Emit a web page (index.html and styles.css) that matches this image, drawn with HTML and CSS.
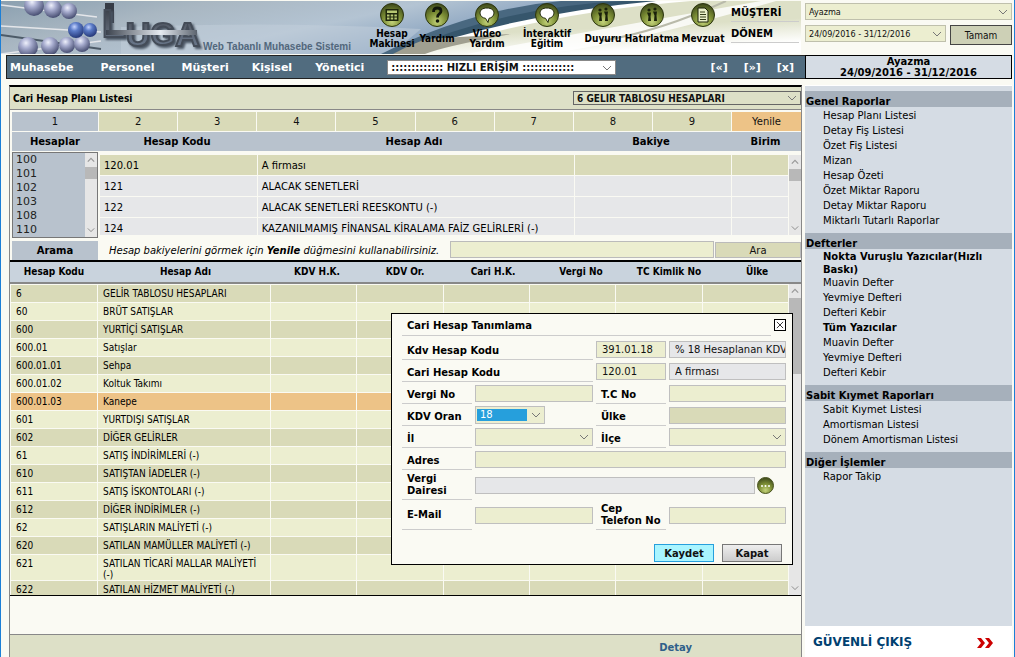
FILE: index.html
```html
<!DOCTYPE html>
<html lang="tr">
<head>
<meta charset="utf-8">
<title>Luca - Cari Hesap Planı Listesi</title>
<link rel="stylesheet" href="styles.css">
</head>
<body>
<svg class="defs" width="0" height="0" aria-hidden="true">
  <defs>
    <radialGradient id="ball" cx="0.4" cy="0.3" r="0.75">
      <stop offset="0" stop-color="#eef0fb"/><stop offset="0.35" stop-color="#a9aed0"/><stop offset="1" stop-color="#3d4468"/>
    </radialGradient>
    <radialGradient id="blueball" cx="0.4" cy="0.3" r="0.75">
      <stop offset="0" stop-color="#c5d4ff"/><stop offset="0.35" stop-color="#5c7cc8"/><stop offset="1" stop-color="#1f3170"/>
    </radialGradient>
    <radialGradient id="olive" cx="0.5" cy="0.8" r="0.8">
      <stop offset="0" stop-color="#c3d27a"/><stop offset="0.5" stop-color="#7d8f35"/><stop offset="1" stop-color="#3a451a"/>
    </radialGradient>
    <linearGradient id="sky" x1="0" y1="0" x2="1" y2="0.4">
      <stop offset="0" stop-color="#8ba0b0"/><stop offset="0.3" stop-color="#a9b7c2"/><stop offset="0.6" stop-color="#b4c4d3"/><stop offset="1" stop-color="#7090b4"/>
    </linearGradient>
    <linearGradient id="steel" x1="0" y1="0" x2="0" y2="1">
      <stop offset="0" stop-color="#2f343c"/><stop offset="0.5" stop-color="#59616e"/><stop offset="1" stop-color="#6f7f95"/>
    </linearGradient>
    <linearGradient id="bar" x1="0" y1="0" x2="1" y2="0">
      <stop offset="0" stop-color="#3b424d"/><stop offset="0.6" stop-color="#e5eaf0"/><stop offset="1" stop-color="#5c646f"/>
    </linearGradient>
    <linearGradient id="fade" x1="0" y1="0" x2="0.35" y2="1">
      <stop offset="0" stop-color="#dde0c7"/><stop offset="0.6" stop-color="#dde0c7"/><stop offset="1" stop-color="#ffffff"/>
    </linearGradient>
    <symbol id="down" viewBox="0 0 10 6"><path d="M1 1l4 4 4-4" fill="none" stroke="#777" stroke-width="1"/></symbol>
    <symbol id="up" viewBox="0 0 10 6"><path d="M1 5l4-4 4 4" fill="none" stroke="#999" stroke-width="1.5"/></symbol>
  </defs>
</svg>

<div class="page">
  <header class="top">
    <svg class="art" viewBox="0 0 800 53" preserveAspectRatio="xMinYMin slice" aria-hidden="true">
      <rect width="800" height="53" fill="#fafaf3"/>
      <rect width="620" height="53" fill="url(#sky)"/>
      <path d="M120 26Q280 20 420 28L390 53H120Z" fill="#c3d0dc" opacity="0.5"/>
      <path d="M380 53Q470 8 560 0H800V53Z" fill="#496880"/>
      <path d="M394 53Q500 6 622 0H800V53Z" fill="#36566c"/>
      <path d="M400 53Q520 12 655 0H800V53Z" fill="#ffffff"/>
      <path d="M418 53Q540 12 690 0H800V53Z" fill="url(#fade)"/>
      <path d="M392 53Q408 44 425 38L510 33Q440 46 424 53Z" fill="#a09f90"/>
      <path d="M465 53Q600 28 760 0H775Q640 40 545 53Z" fill="#ffffff" opacity="0.8"/>
      <path d="M600 40Q660 30 725 0" stroke="#b9baaa" stroke-width="2" fill="none"/>
      <g stroke="#e4e6ea" stroke-width="1.5">
        <path d="M0 4L96 16M0 25L100 31M0 53L100 40"/>
      </g>
      <path d="M0 34L100 48" stroke="#4d5b68" stroke-width="2"/>
      <g fill="url(#ball)">
        <circle cx="33" cy="5" r="10"/><circle cx="52" cy="8" r="9"/><circle cx="68" cy="10" r="8"/>
        <circle cx="27" cy="46" r="10"/><circle cx="49" cy="45" r="9"/><circle cx="66" cy="44" r="8"/><circle cx="81" cy="43" r="8"/>
      </g>
      <g fill="url(#blueball)"><circle cx="75" cy="29" r="8"/><circle cx="89" cy="29" r="7"/></g>
      <rect x="104" y="2" width="9" height="20" fill="#363c46"/>
      <text class="logo" x="101" y="36" fill="url(#steel)"><tspan font-size="39">L</tspan><tspan font-size="34" dy="9">U</tspan><tspan font-size="32" dy="-1">G</tspan><tspan font-size="34" dy="1">A</tspan></text>
      <rect x="105" y="29" width="91" height="5" fill="url(#bar)"/>
      <text class="slogan" x="202" y="49">Web Tabanlı Muhasebe Sistemi</text>
    </svg>
    <nav class="tools">
      <a href="#"><svg viewBox="0 0 24 24"><circle cx="12" cy="12" r="11.5" fill="url(#olive)" stroke="#2c3510"/><rect x="5.500" y="6" width="13" height="12" fill="#1f270c"/><rect x="7" y="7.500" width="10" height="2.500" fill="#b7c773"/><path d="M7 12.500h10M7 15.500h10" stroke="#b7c773" stroke-width="2" stroke-dasharray="2.500 1.200"/></svg><span>Hesap<br>Makinesi</span></a>
      <a href="#"><svg viewBox="0 0 24 24"><circle cx="12" cy="12" r="11.5" fill="url(#olive)" stroke="#2c3510"/><path d="M8.500 9q0-4 4-4 3.500 0 3.500 3 0 2-2 3.200-1.500 1-1.500 3.300" fill="none" stroke="#11160a" stroke-width="2.800"/><circle cx="12.500" cy="18" r="1.800" fill="#11160a"/></svg><span>Yardım</span></a>
      <a href="#"><svg viewBox="0 0 24 24"><circle cx="12" cy="12" r="11.5" fill="url(#olive)" stroke="#2c3510"/><path d="M12 5c4.500 0 7 2.200 7 5s-2.500 5-5 5.300L13 19.500l-2.500-4.200C7.500 15 5 13 5 10s2.500-5 7-5z" fill="#fff" stroke="#222a0e"/></svg><span>Video<br>Yardım</span></a>
      <a href="#"><svg viewBox="0 0 24 24"><circle cx="12" cy="12" r="11.5" fill="url(#olive)" stroke="#2c3510"/><path d="M12 5c4.500 0 7 2.200 7 5s-2.500 5-5 5.300L13 19.500l-2.500-4.200C7.500 15 5 13 5 10s2.500-5 7-5z" fill="#fff" stroke="#222a0e"/></svg><span>İnteraktif<br>Eğitim</span></a>
      <a href="#"><svg viewBox="0 0 24 24"><circle cx="12" cy="12" r="11.5" fill="url(#olive)" stroke="#2c3510"/><g fill="#1a210b"><circle cx="9" cy="7" r="1.600"/><path d="M7 9.500h4l-.5 4 .5 4.500H8l.5-4.500z"/><circle cx="15" cy="6" r="1.600"/><path d="M13 8.500h4l-.5 4 .5 5.500h-3l.5-5.500z"/></g></svg><span>Duyuru</span></a>
      <a href="#"><svg viewBox="0 0 24 24"><circle cx="12" cy="12" r="11.5" fill="url(#olive)" stroke="#2c3510"/><g fill="#1a210b"><circle cx="9" cy="7" r="1.600"/><path d="M7 9.500h4l-.5 4 .5 4.500H8l.5-4.500z"/><circle cx="15" cy="6" r="1.600"/><path d="M13 8.500h4l-.5 4 .5 5.500h-3l.5-5.500z"/></g></svg><span>Hatırlatma</span></a>
      <a href="#"><svg viewBox="0 0 24 24"><circle cx="12" cy="12" r="11.5" fill="url(#olive)" stroke="#2c3510"/><path d="M7 5h7l3 3v11H7z" fill="#e9efc8" stroke="#1a210b"/><path d="M9 9h5M9 11.500h6M9 14h6M9 16.500h6" stroke="#333d18"/></svg><span>Mevzuat</span></a>
    </nav>
    <div class="caption"><label for="musteri">MÜŞTERİ</label><label for="donem">DÖNEM</label></div>
    <div class="choose">
      <div class="pick small"><select id="musteri"><option>Ayazma</option></select><svg><use href="#down"/></svg></div>
      <div class="period">
        <div class="pick small"><select id="donem"><option>24/09/2016 - 31/12/2016</option></select><svg><use href="#down"/></svg></div>
        <button class="ok" type="button">Tamam</button>
      </div>
    </div>
  </header>

  <div class="strip">
    <nav class="menu">
      <a href="#">Muhasebe</a><a href="#">Personel</a><a class="near" href="#">Müşteri</a><a class="near" href="#">Kişisel</a><a class="near" href="#">Yönetici</a>
      <div class="pick quick"><select aria-label="Hızlı erişim"><option>::::::::::::: HIZLI ERİŞİM :::::::::::::</option></select><svg><use href="#down"/></svg></div>
      <div class="jumps"><a href="#">[«]</a><a href="#">[»]</a><a href="#">[x]</a></div>
    </nav>
    <div class="company"><span>Ayazma</span><span>24/09/2016 - 31/12/2016</span></div>
  </div>

  <div class="body">
    <main class="main">
      <div class="titlebar">
        <h1>Cari Hesap Planı Listesi</h1>
        <div class="pick group"><select aria-label="Hesap grubu"><option>6 GELİR TABLOSU HESAPLARI</option></select><svg><use href="#down"/></svg></div>
      </div>
      <div class="filter">
        <div class="tabs">
          <button class="on" type="button">1</button><button type="button">2</button><button type="button">3</button><button type="button">4</button><button type="button">5</button><button type="button">6</button><button type="button">7</button><button type="button">8</button><button type="button">9</button><button class="renew" type="button">Yenile</button>
        </div>
        <div class="heads"><span>Hesaplar</span><span>Hesap Kodu</span><span>Hesap Adı</span><span>Bakiye</span><span>Birim</span></div>
        <div class="lists">
          <div class="codes">
            <select size="6" aria-label="Hesaplar"><option>100</option><option>101</option><option>102</option><option>103</option><option>108</option><option>110</option></select>
            <div class="bar short"><svg><use href="#up"/></svg><i></i><svg><use href="#down"/></svg></div>
          </div>
          <div class="picked">
            <table>
              <colgroup><col class="w1"><col class="w2"><col class="w3"><col class="w4"></colgroup>
              <tr class="sel"><td>120.01</td><td>A firması</td><td></td><td></td></tr>
              <tr><td>121</td><td>ALACAK SENETLERİ</td><td></td><td></td></tr>
              <tr><td>122</td><td>ALACAK SENETLERİ REESKONTU (-)</td><td></td><td></td></tr>
              <tr><td>124</td><td>KAZANILMAMIŞ FİNANSAL KİRALAMA FAİZ GELİRLERİ (-)</td><td></td><td></td></tr>
            </table>
            <div class="bar short"><svg><use href="#up"/></svg><i></i><svg><use href="#down"/></svg></div>
          </div>
        </div>
        <div class="search">
          <label for="ara">Arama</label>
          <p>Hesap bakiyelerini görmek için <b>Yenile</b> düğmesini kullanabilirsiniz.</p>
          <input id="ara" type="text">
          <button type="button">Ara</button>
        </div>
      </div>
      <div class="gridhead"><span>Hesap Kodu</span><span>Hesap Adı</span><span>KDV H.K.</span><span>KDV Or.</span><span>Cari H.K.</span><span>Vergi No</span><span>TC Kimlik No</span><span>Ülke</span></div>
      <div class="scroll">
        <table class="accounts">
          <colgroup><col class="c1"><col class="c2"><col class="c3"><col class="c3"><col class="c3"><col class="c3"><col class="c3"><col class="c3"></colgroup>
          <tr><td>6</td><td>GELİR TABLOSU HESAPLARI</td><td></td><td></td><td></td><td></td><td></td><td></td></tr>
          <tr><td>60</td><td>BRÜT SATIŞLAR</td><td></td><td></td><td></td><td></td><td></td><td></td></tr>
          <tr><td>600</td><td>YURTİÇİ SATIŞLAR</td><td></td><td></td><td></td><td></td><td></td><td></td></tr>
          <tr><td>600.01</td><td>Satışlar</td><td></td><td></td><td></td><td></td><td></td><td></td></tr>
          <tr><td>600.01.01</td><td>Sehpa</td><td></td><td></td><td></td><td></td><td></td><td></td></tr>
          <tr><td>600.01.02</td><td>Koltuk Takımı</td><td></td><td></td><td></td><td></td><td></td><td></td></tr>
          <tr class="hot"><td>600.01.03</td><td>Kanepe</td><td></td><td></td><td></td><td></td><td></td><td></td></tr>
          <tr><td>601</td><td>YURTDIŞI SATIŞLAR</td><td></td><td></td><td></td><td></td><td></td><td></td></tr>
          <tr><td>602</td><td>DİĞER GELİRLER</td><td></td><td></td><td></td><td></td><td></td><td></td></tr>
          <tr><td>61</td><td>SATIŞ İNDİRİMLERİ (-)</td><td></td><td></td><td></td><td></td><td></td><td></td></tr>
          <tr><td>610</td><td>SATIŞTAN İADELER (-)</td><td></td><td></td><td></td><td></td><td></td><td></td></tr>
          <tr><td>611</td><td>SATIŞ İSKONTOLARI (-)</td><td></td><td></td><td></td><td></td><td></td><td></td></tr>
          <tr><td>612</td><td>DİĞER İNDİRİMLER (-)</td><td></td><td></td><td></td><td></td><td></td><td></td></tr>
          <tr><td>62</td><td>SATIŞLARIN MALİYETİ (-)</td><td></td><td></td><td></td><td></td><td></td><td></td></tr>
          <tr><td>620</td><td>SATILAN MAMÜLLER MALİYETİ (-)</td><td></td><td></td><td></td><td></td><td></td><td></td></tr>
          <tr><td>621</td><td>SATILAN TİCARİ MALLAR MALİYETİ (-)</td><td></td><td></td><td></td><td></td><td></td><td></td></tr>
          <tr><td>622</td><td>SATILAN HİZMET MALİYETİ (-)</td><td></td><td></td><td></td><td></td><td></td><td></td></tr>
        </table>
        <div class="bar long"><svg><use href="#up"/></svg><i></i><svg><use href="#down"/></svg></div>
      </div>
      <footer class="foot"><a href="#">Detay</a></footer>

      <form class="modal">
        <div class="modalhead"><h2>Cari Hesap Tanımlama</h2><button type="button" aria-label="Pencereyi kapat"><svg viewBox="0 0 9 9"><path d="M1 1l7 7M8 1l-7 7" stroke="#222" fill="none"/></svg></button></div>
        <div class="fields">
          <label class="wide" for="kdvkod">Kdv Hesap Kodu</label><input id="kdvkod" value="391.01.18"><input class="grey" aria-label="Kdv hesap adı" value="% 18 Hesaplanan KDV" readonly>
          <label class="wide" for="carikod">Cari Hesap Kodu</label><input id="carikod" value="120.01"><input class="grey" aria-label="Cari hesap adı" value="A firması" readonly>
          <label for="vergino">Vergi No</label><input id="vergino"><label for="tcno">T.C No</label><input id="tcno">
          <label for="oran">KDV Oran</label><div class="pick field rate"><select id="oran"><option>18</option></select><svg><use href="#down"/></svg></div><label for="ulke">Ülke</label><input id="ulke" class="khaki">
          <label for="il">İl</label><div class="pick field"><select id="il"><option></option></select><svg><use href="#down"/></svg></div><label for="ilce">İlçe</label><div class="pick field"><select id="ilce"><option></option></select><svg><use href="#down"/></svg></div>
          <label for="adres">Adres</label><input id="adres" class="full">
          <label class="two" for="daire">Vergi<br>Dairesi</label><div class="office"><input id="daire" class="grey" readonly><button type="button" aria-label="Vergi dairesi seç"><svg viewBox="0 0 17 17"><circle cx="8.500" cy="8.500" r="8" fill="url(#olive)" stroke="#4a5420"/><g fill="#fff"><circle cx="5" cy="9" r="1"/><circle cx="8.500" cy="9" r="1"/><circle cx="12" cy="9" r="1"/></g></svg></button></div>
          <label class="two" for="mail">E-Mail</label><input id="mail"><label class="two" for="cep">Cep<br>Telefon No</label><input id="cep">
        </div>
        <div class="actions"><button class="save" type="button">Kaydet</button><button type="button">Kapat</button></div>
      </form>
    </main>

    <aside class="side">
      <div class="reports">
        <section><h2>Genel Raporlar</h2><ul><li><a href="#">Hesap Planı Listesi</a></li><li><a href="#">Detay Fiş Listesi</a></li><li><a href="#">Özet Fiş Listesi</a></li><li><a href="#">Mizan</a></li><li><a href="#">Hesap Özeti</a></li><li><a href="#">Özet Miktar Raporu</a></li><li><a href="#">Detay Miktar Raporu</a></li><li><a href="#">Miktarlı Tutarlı Raporlar</a></li></ul></section>
        <section><h2>Defterler</h2><ul><li class="strong tight">Nokta Vuruşlu Yazıcılar(Hızlı Baskı)</li><li><a href="#">Muavin Defter</a></li><li><a href="#">Yevmiye Defteri</a></li><li><a href="#">Defteri Kebir</a></li><li class="strong">Tüm Yazıcılar</li><li><a href="#">Muavin Defter</a></li><li><a href="#">Yevmiye Defteri</a></li><li><a href="#">Defteri Kebir</a></li></ul></section>
        <section><h2>Sabit Kıymet Raporları</h2><ul><li><a href="#">Sabit Kıymet Listesi</a></li><li><a href="#">Amortisman Listesi</a></li><li><a href="#">Dönem Amortisman Listesi</a></li></ul></section>
        <section><h2>Diğer İşlemler</h2><ul><li><a href="#">Rapor Takip</a></li></ul></section>
      </div>
      <a class="exit" href="#">GÜVENLİ ÇIKIŞ <svg viewBox="0 0 16 10"><path d="M0 0h4l4 5-4 5H0l4-5zM8 0h4l4 5-4 5H8l4-5z" fill="#c00"/></svg></a>
    </aside>
  </div>
</div>
</body>
</html>
```
FILE: styles.css
```css
* { box-sizing: border-box; }

body {
  margin: 0;
  font: 10px/13px "DejaVu Sans", Verdana, sans-serif;
  color: #000;
  background: #fafaf3;
}

a { color: inherit; text-decoration: none; }
h1, h2, p, ul { margin: 0; padding: 0; font-size: 10px; }
ul { list-style: none; }
input, select, button { font: inherit; color: #111; margin: 0; border-radius: 0; min-width: 0; }
button { padding: 0; }
.defs { position: absolute; }

.page {
  min-height: 100vh;
  display: flex;
  flex-direction: column;
  border-left: 1px solid #1c7fd6;
  border-right: 1px solid #1c7fd6;
  padding-top: 1px;
}

/* drop-downs */
.pick { position: relative; display: flex; }
.pick select {
  appearance: none;
  width: 100%;
  height: 18px;
  padding: 0 16px 0 3px;
  border: 1px solid #bfc0ac;
  background: #eceed0;
}
.pick svg { position: absolute; right: 4px; top: 6px; width: 10px; height: 6px; pointer-events: none; }
.small { font: 9px/12px "DejaVu Sans Condensed", Tahoma, sans-serif; }
.small select { height: 17px; }

/* header */
.top { position: relative; display: flex; height: 53px; overflow: hidden; }
.art { position: absolute; left: 0; top: 0; width: 800px; height: 53px; }
.logo {
  font-family: "Liberation Sans", Arial, sans-serif;
  font-weight: bold;
  stroke: #444c58;
  stroke-width: 2px;
  filter: drop-shadow(2px 2px 1px #4a5563);
}
.slogan { font: bold 10px "Liberation Sans", Arial, sans-serif; fill: #52677c; }
.tools {
  position: relative;
  display: grid;
  grid-template-columns: 50px 40px 60px 60px 52px 46px 56px;
  margin-left: auto;
  padding-top: 2px;
  font: bold 10px/10px "DejaVu Sans Condensed", Tahoma, sans-serif;
}
.tools a { display: flex; flex-direction: column; align-items: center; }
.tools svg { width: 24px; height: 24px; }
.tools span { flex: 1; display: flex; align-items: center; padding-bottom: 3px; text-align: center; white-space: nowrap; }
.caption { position: relative; width: 68px; font-weight: bold; }
.caption label { display: block; height: 21px; padding-top: 5px; border-bottom: 1px solid #ccc; }
.choose { position: relative; width: 207px; margin: 2px 2px 0 6px; }
.period { display: grid; grid-template-columns: 1fr 62px; gap: 4px; margin-top: 5px; align-items: start; }
.ok { height: 20px; border: 1px solid #444; background: #cdd0b6; font: 10px "DejaVu Sans Condensed", Tahoma, sans-serif; }

/* menu strip */
.strip { display: flex; margin: 1px 2px 0 5px; height: 24px; }
.menu {
  flex: 1;
  display: flex;
  align-items: center;
  padding: 0 11px 0 3px;
  background: #516c7f;
  border: 1px solid #222;
  border-right: 0;
  color: #fff;
  font-size: 11px;
  font-weight: bold;
}
.menu > a { margin-right: 27px; }
.menu > .near { margin-right: 23px; }
.quick { flex: 0 0 229px; font-size: 10px; }
.quick select { height: 15px; background: #fff; border-color: #888; font-weight: bold; }
.quick svg { top: 5px; }
.jumps { margin-left: auto; display: flex; gap: 16px; }
.company {
  width: 207px;
  display: flex;
  flex-direction: column;
  align-items: center;
  border: 1px solid #000;
  background: #d5dce4;
  font-weight: bold;
  line-height: 11px;
}

/* two columns */
.body { flex: 1; display: flex; gap: 3px; margin: 6px 2px 0 8px; }
.main {
  position: relative;
  flex: 1;
  min-width: 0;
  display: flex;
  flex-direction: column;
  border: 1px solid #888;
  border-top: 2px solid #000;
  border-bottom: 0;
}
.titlebar {
  display: flex;
  align-items: center;
  justify-content: space-between;
  height: 23px;
  padding-left: 3px;
  background: #dde0c7;
  border-bottom: 1px solid #888;
  font: bold 10px "DejaVu Sans Condensed", Tahoma, sans-serif;
}
.group { width: 228px; }
.group select { height: 14px; border-color: #666; background: #dde0c7; font-weight: bold; }
.group svg { top: 4px; }

/* filter area */
.filter { padding: 2px 0 0 2px; }
.tabs { display: grid; grid-template-columns: 86px repeat(8, 1fr) 69px; gap: 1px; }
.tabs button { height: 19px; border: 0; background: #d9dab8; }
.tabs .on { background: #b8c2cd; }
.tabs .renew { background: #edc387; }
.heads, .lists { display: grid; }
.heads {
  grid-template-columns: 86px 158px 316px 158px 1fr;
  margin-top: 1px;
  line-height: 19px;
  text-align: center;
  font-weight: bold;
  background: #b8c2cd;
}
.lists { grid-template-columns: 86px 1fr; gap: 2px; padding-top: 1px; }
.codes { display: flex; height: 86px; border: 1px solid #777; background: #b8c2cd; }
.codes select { flex: 1; padding: 0; border: 0; background: none; overflow: hidden; font-size: 11px; appearance: none; color: #222; }
.codes option { height: 14px; min-height: 14px; padding: 0 3px; line-height: 14px; }
.picked { display: flex; height: 80px; margin-top: 3px; overflow: hidden; }
table { border-collapse: separate; border-spacing: 1px; table-layout: fixed; }
td { padding: 0 4px; vertical-align: top; }
.picked table { flex: 1; border-spacing: 0; }
.picked td { height: 21px; padding-top: 1px; line-height: 19px; background: #e6e7e9; border-right: 1px solid #fafaf3; border-bottom: 1px solid #fafaf3; white-space: nowrap; }
.picked .sel td { background: #d9dab8; }
.w1 { width: 158px; } .w2 { width: 317px; } .w3 { width: 158px; } .w4 { width: 57px; }

.bar { flex: none; width: 12px; display: flex; flex-direction: column; align-items: center; background: #e6e6e6; }
.bar svg { width: 8px; height: 6px; margin: 4px 0; }
.bar svg:last-child { margin-top: auto; }
.bar i { width: 12px; background: #b8b8b8; }
.short i { height: 12px; }
.long i { height: 76px; }

.search { display: grid; grid-template-columns: 86px 350px 1fr 86px; gap: 1px; margin-top: 3px; height: 19px; }
.search label { background: #b8c2cd; text-align: center; font-weight: bold; line-height: 19px; }
.search p { padding-left: 10px; font-style: italic; line-height: 19px; white-space: nowrap; }
.search input { border: 1px solid #bbb; background: #eceed0; height: 17px; }
.search button { border: 1px solid #bbb; background: #d9dab8; height: 16px; margin-top: 1px; }

/* accounts */
.gridhead, .accounts, .foot { font-family: "DejaVu Sans Condensed", Tahoma, sans-serif; }
.gridhead {
  display: grid;
  grid-template-columns: 88px 175px repeat(6, 1fr);
  border-top: 2px solid #000;
  border-bottom: 2px solid #888;
  background: #c9d3dd;
  text-align: center;
  font-weight: bold;
  line-height: 20px;
}
.scroll { display: flex; align-items: stretch; height: 312px; overflow: hidden; border-bottom: 1px solid #000; }
.accounts { flex: 1; height: max-content; }
.accounts td { height: 17px; padding: 3px 5px 0; line-height: 11px; background: #eceed0; }
.accounts tr:nth-child(odd) td { background: #d9dab8; }
.accounts tr.hot:nth-child(n) td { background: #edc387; }
.c1 { width: 86px; } .c2 { width: 172px; }
.foot {
  margin-top: auto;
  height: 23px;
  padding: 6px 109px 0 0;
  border-top: 1px solid #888;
  background: #dde0c7;
  text-align: right;
}
.foot a { font: bold 10px "DejaVu Sans", Verdana, sans-serif; color: #2f5f8a; }

/* dialog over the list */
.modal {
  position: absolute;
  left: 381px;
  top: 226px;
  width: 402px;
  padding: 0 6px 2px 10px;
  border: 1px solid #000;
  background: #fafaf3;
}
.modalhead { display: grid; grid-template-columns: 1fr 12px; gap: 3px; align-items: center; }
.modalhead h2 { padding: 5px 5px 3px; border-bottom: 1px solid #ccc; }
.modalhead button { height: 12px; border: 1px solid #000; background: #fff; display: grid; place-items: center; }
.modalhead svg { width: 8px; height: 8px; }
.fields { display: grid; grid-template-columns: 70px 118px 70px 1fr; column-gap: 3px; padding-top: 2px; }
.fields label { height: 22px; padding: 6px 0 0 5px; border-bottom: 1px solid #ccc; font-weight: bold; white-space: nowrap; }
.fields .wide { grid-column: span 2; }
.fields .two { height: 30px; padding: 0 0 0 5px; display: flex; align-items: center; line-height: 12px; }
.fields input { align-self: center; width: 100%; height: 17px; padding: 0 0 0 5px; border: 1px solid #bfbfbf; background: #eceed0; }
.fields .grey { background: #e6e7e9; }
.fields .khaki { background: #d9dab8; }
.fields .full { grid-column: span 3; }
.field { align-items: center; }
.field select { border-color: #bfbfbf; }
.field svg { top: 8px; }
.rate { width: 70px; }
.rate select { padding: 2px 17px 2px 1px; color: #fff; text-indent: 3px; line-height: 12px; background: linear-gradient(#269fdc, #269fdc) content-box no-repeat, #eceed0; }
.office { grid-column: span 3; display: grid; grid-template-columns: 280px 17px; gap: 2px; align-items: center; }
.office button { height: 17px; border: 0; background: none; }
.office svg { display: block; width: 17px; height: 17px; }
.actions { display: flex; justify-content: flex-end; gap: 8px; padding: 14px 4px 0 0; }
.actions button { width: 60px; height: 18px; border: 1px solid #777; background: linear-gradient(#eee, #ccc); font-weight: bold; }
.actions .save { border-color: #269fdc; background: #a9f5ff; }

/* reports */
.side { width: 207px; display: flex; flex-direction: column; background: #fff; }
.reports { flex: 1; margin-top: 1px; padding-top: 5px; background: #d5dce4; }
.reports section { margin-bottom: 6px; }
.reports h2 { height: 16px; padding: 4px 1px 0; background: #a6b0bb; line-height: 13px; }
.reports ul { padding: 2px 16px 0 18px; }
.reports li { margin-bottom: 2px; }
.reports .tight { margin: -1px 0 0; }
.strong { font-weight: bold; }
.exit {
  display: flex;
  align-items: center;
  justify-content: space-between;
  height: 31px;
  padding: 2px 19px 0 8px;
  color: #004070;
  font-size: 12px;
  font-weight: bold;
}
.exit svg { width: 16px; height: 10px; }
```
